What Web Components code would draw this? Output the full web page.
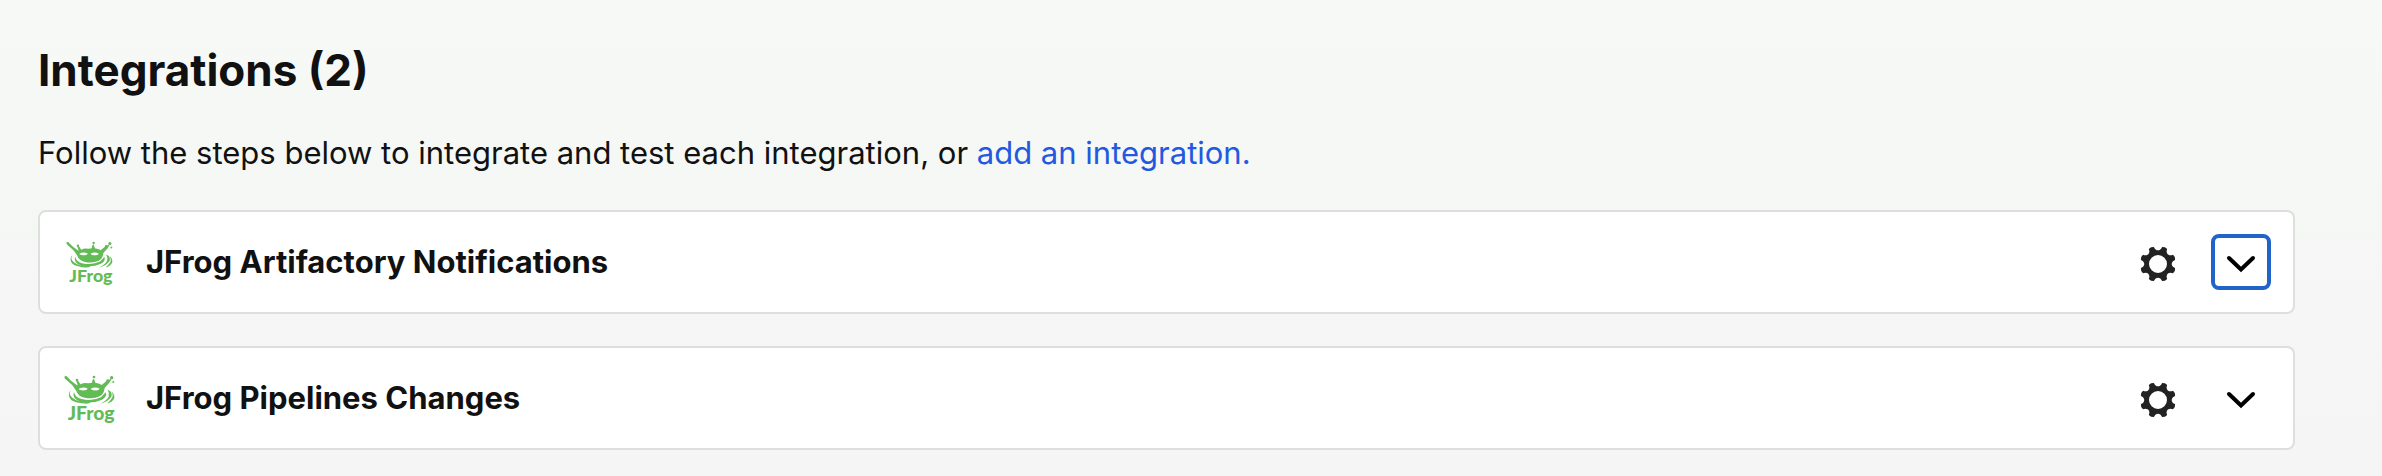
<!DOCTYPE html>
<html lang="en">
<head>
<meta charset="utf-8">
<title>Integrations</title>
<style>
body { margin: 0; min-height: 100vh; font-family: Inter, "Liberation Sans", sans-serif; color: #111; background: linear-gradient(180deg, #f7f9f7 0%, #f5f7f5 50%, #f6f6f6 60%, #f5f5f5 100%); }
</style>
</head>
<body>
<integrations-page count="2">
  <integration-card logo-size="46" focused>JFrog Artifactory Notifications</integration-card>
  <integration-card logo-size="50">JFrog Pipelines Changes</integration-card>
</integrations-page>

<template id="page-template">
  <style>
    :host { display: block; padding: 44px 87px 20px 38px; }
    h1 { margin: 0; font-size: 44px; line-height: 52px; font-weight: 700; }
    p { margin: 35px 0 0; font-size: 31px; line-height: 44px; }
    a { color: #2359e0; text-decoration: none; }
    .list { display: flex; flex-direction: column; gap: 32px; margin-top: 35px; }
  </style>
  <h1></h1>
  <p>Follow the steps below to integrate and test each integration, or <a href="#add">add an integration.</a></p>
  <div class="list"><slot></slot></div>
</template>

<template id="card-template">
  <style>
    :host { display: flex; align-items: center; box-sizing: border-box; min-height: 104px; padding: 0 22px; border: 2px solid #dedede; border-radius: 8px; background: #fff; }
    .logo { display: flex; justify-content: center; width: 54px; margin-right: 30px; padding-top: 4px; }
    h2 { flex: 1; margin: 0; font-size: 31px; line-height: 40px; font-weight: 700; }
    button { display: flex; align-items: center; justify-content: center; box-sizing: border-box; width: 60px; height: 56px; padding: 4px 0 0; border: 4px solid transparent; border-radius: 8px; background: none; outline: none; color: #000; }
    .actions { display: flex; gap: 23px; }
    .gear { color: #222; }
    :host([focused]) .toggle { border-color: #2063c9; }
    svg { display: block; }
  </style>
  <div class="logo"><jfrog-logo></jfrog-logo></div>
  <h2><slot></slot></h2>
  <div class="actions">
    <button class="gear" type="button" aria-label="Settings">
      <svg width="36" height="36" viewBox="-18 -18 36 36"></svg>
    </button>
    <button class="toggle" type="button" aria-label="Expand">
      <svg width="30" height="20" viewBox="0 0 30 20"><path d="M3 4 15 15.500 27 4" fill="none" stroke="currentColor" stroke-width="4" stroke-linecap="round"/></svg>
    </button>
  </div>
</template>

<template id="logo-template">
  <style>
    :host { display: block; }
    svg { display: block; width: 100%; height: auto; overflow: visible; }
    text { font: 900 58px Lato, sans-serif; }
  </style>
  <svg viewBox="0 0 150 145" fill="#62bb54" role="img" aria-label="JFrog">
    <path d="M1 2Q7-3 11 4L22 15 37 26Q44 30 50 25Q61 19 72 22L88 20Q107 21 113 27L131 12 143 8 136 20 122 36Q120 54 107 61Q88 70 62 65Q41 60 37 45L25 28 8 12Q1 9 1 2Z"/>
    <path d="M43 39Q55 31 70 37Q71 43 60 43Q50 44 43 39ZM80 38Q94 31 107 38Q104 44 94 43Q84 44 80 38Z" fill="#fff"/>
    <circle cx="90" cy="3" r="4"/><circle cx="143" cy="5" r="5"/><circle cx="39" cy="12" r="4"/><circle cx="131" cy="14" r="4"/><circle cx="148" cy="18" r="3"/>
    <path d="M86 11 90 8 95 23H83ZM37 15 43 15 51 28 43 34Z"/>
    <path d="M21 43Q12 54 25 65Q45 81 81 79Q73 86 54 82Q22 79 16 64Q12 49 21 43ZM30 48Q33 64 52 69Q85 77 111 64L125 49Q131 61 114 71Q86 84 50 77Q22 67 30 48ZM131 41Q147 47 142 62Q132 77 109 83Q129 72 134 62Q137 52 131 41ZM142 46Q152 54 151 66Q146 79 129 83Q144 70 146 61Q147 54 142 46Z"/>
    <text x="11" y="132">JFrog</text>
  </svg>
</template>

<script>
const stamp = (host, id) => {
  const root = host.attachShadow({ mode: "open" });
  root.append(document.getElementById(id).content.cloneNode(true));
  return root;
};

// Ring with eight teeth separated by concave valleys, traced around the origin.
const gearPath = () => {
  const at = (degrees, radius) => {
    const angle = degrees * Math.PI / 180;
    return (radius * Math.cos(angle)).toFixed(2) + " " + (radius * Math.sin(angle)).toFixed(2);
  };
  let d = "M" + at(13.5, 17.6);
  for (let i = 0; i < 8; i++) {
    const centre = i * 45 + 22.5;
    d += `L${at(centre, 18.2)}L${at(centre + 9, 17.6)}C${at(centre + 12, 12.8)} ${at(centre + 33, 12.8)} ${at(centre + 36, 17.6)}`;
  }
  return d + "ZM9 0A9 9 0 1 0 -9 0A9 9 0 1 0 9 0Z";
};

customElements.define("jfrog-logo", class extends HTMLElement {
  constructor() { super(); stamp(this, "logo-template"); }
});

customElements.define("integration-card", class extends HTMLElement {
  constructor() {
    super();
    const root = stamp(this, "card-template");
    const path = document.createElementNS("http://www.w3.org/2000/svg", "path");
    path.setAttribute("d", gearPath());
    path.setAttribute("fill", "currentColor");
    path.setAttribute("fill-rule", "evenodd");
    root.querySelector(".gear svg").append(path);
  }
  connectedCallback() {
    this.shadowRoot.querySelector("jfrog-logo").style.width = this.getAttribute("logo-size") + "px";
  }
});

customElements.define("integrations-page", class extends HTMLElement {
  constructor() { super(); stamp(this, "page-template"); }
  connectedCallback() {
    this.shadowRoot.querySelector("h1").textContent = `Integrations (${this.getAttribute("count")})`;
  }
});
</script>
</body>
</html>
